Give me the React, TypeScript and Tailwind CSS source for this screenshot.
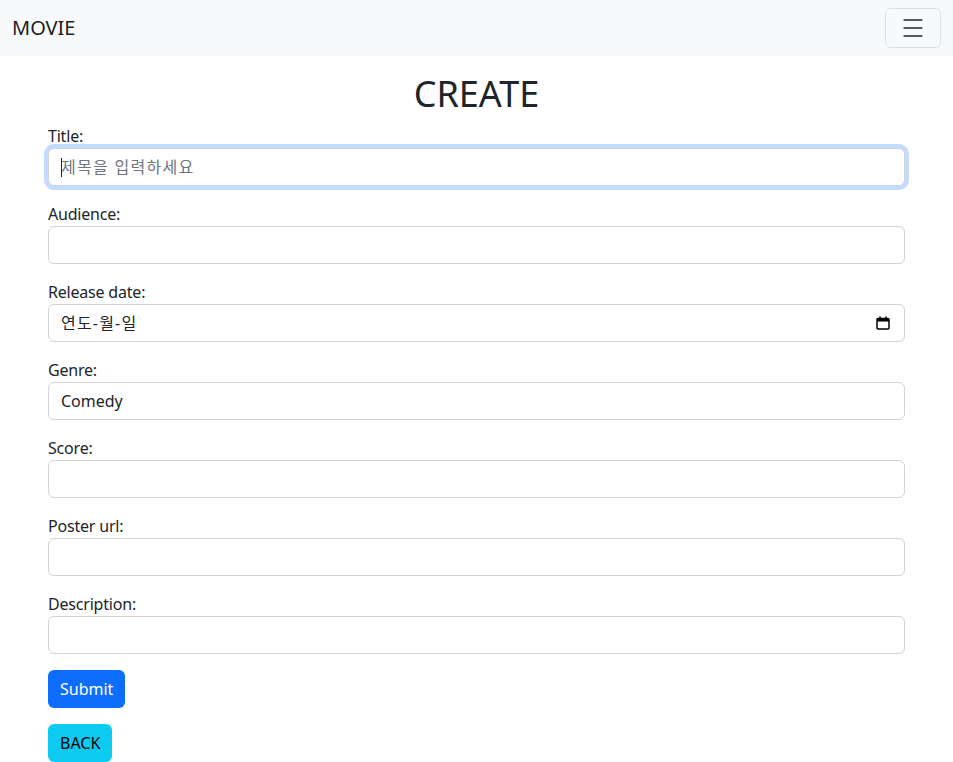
import React from "react";

const font = { fontFamily: '"Noto Sans", "Noto Sans CJK KR", sans-serif' };

const inputCls =
  "block w-full h-[38px] px-3 text-base text-[#212529] bg-white border border-[#ced4da] rounded-[6px] outline-none placeholder:text-[#6c757d]";

function Field({ label, children }: { label: string; children: React.ReactNode }) {
  return (
    <div className="mb-4">
      <label className="block h-6 leading-6 text-base text-[#212529] tracking-[-0.2px]">{label}</label>
      {children}
    </div>
  );
}

export default function App() {
  return (
    <div className="min-h-[762px] bg-white text-[#212529]" style={font}>
      {/* navbar */}
      <nav className="h-14 bg-[#f8f9fa] flex items-center justify-between px-3">
        <span className="text-xl leading-[30px] text-[rgba(0,0,0,0.9)]">MOVIE</span>
        <button className="w-14 h-10 border border-[rgba(0,0,0,0.1)] rounded-[6px] flex items-center justify-center">
          <svg width="30" height="30" viewBox="0 0 30 30">
            <path
              d="M4 7h22M4 15h22M4 23h22"
              stroke="rgba(33,37,41,0.75)"
              strokeWidth="2"
              strokeLinecap="round"
              transform="translate(3 0) scale(0.8 1)"
            />
          </svg>
        </button>
      </nav>

      <div className="px-12">
        <h1 className="text-center text-[36px] leading-[44px] font-normal mt-[16px] mb-2">CREATE</h1>
        <form>
          <Field label="Title:">
            <div className="relative">
              <input
                className={inputCls + " border-[#86b7fe] shadow-[0_0_0_4px_rgba(13,110,253,0.25)] tracking-[1.3px]"}
                placeholder="제목을 입력하세요"
                style={font}
              />
              {/* caret */}
              <span className="absolute left-[13px] top-[10px] w-px h-[19px] bg-[#212529]" />
            </div>
          </Field>
          <Field label="Audience:">
            <input className={inputCls} style={font} />
          </Field>
          <Field label="Release date:">
            <div className={inputCls + " flex items-center justify-between"}>
              <span className="tracking-[1.2px]">연도-월-일</span>
              <svg width="16" height="16" viewBox="0 0 16 16" className="mr-[1px]">
                <rect x="2" y="3.5" width="12" height="10.5" rx="1" fill="none" stroke="#000" strokeWidth="1.5" />
                <rect x="2" y="3.5" width="12" height="3" fill="#000" />
                <path d="M5 1.5v3M11 1.5v3" stroke="#000" strokeWidth="1.5" />
              </svg>
            </div>
          </Field>
          <Field label="Genre:">
            <input className={inputCls} defaultValue="Comedy" style={font} />
          </Field>
          <Field label="Score:">
            <input className={inputCls} style={font} />
          </Field>
          <Field label="Poster url:">
            <input className={inputCls} style={font} />
          </Field>
          <Field label="Description:">
            <input className={inputCls} style={font} />
          </Field>
          <button
            type="button"
            className="h-[38px] px-3 rounded-[6px] bg-[#0d6efd] text-white text-base"
            style={font}
          >
            Submit
          </button>
        </form>
        <button
          type="button"
          className="mt-4 h-[38px] px-3 rounded-[6px] bg-[#0dcaf0] text-black text-base"
          style={font}
        >
          BACK
        </button>
      </div>
    </div>
  );
}
